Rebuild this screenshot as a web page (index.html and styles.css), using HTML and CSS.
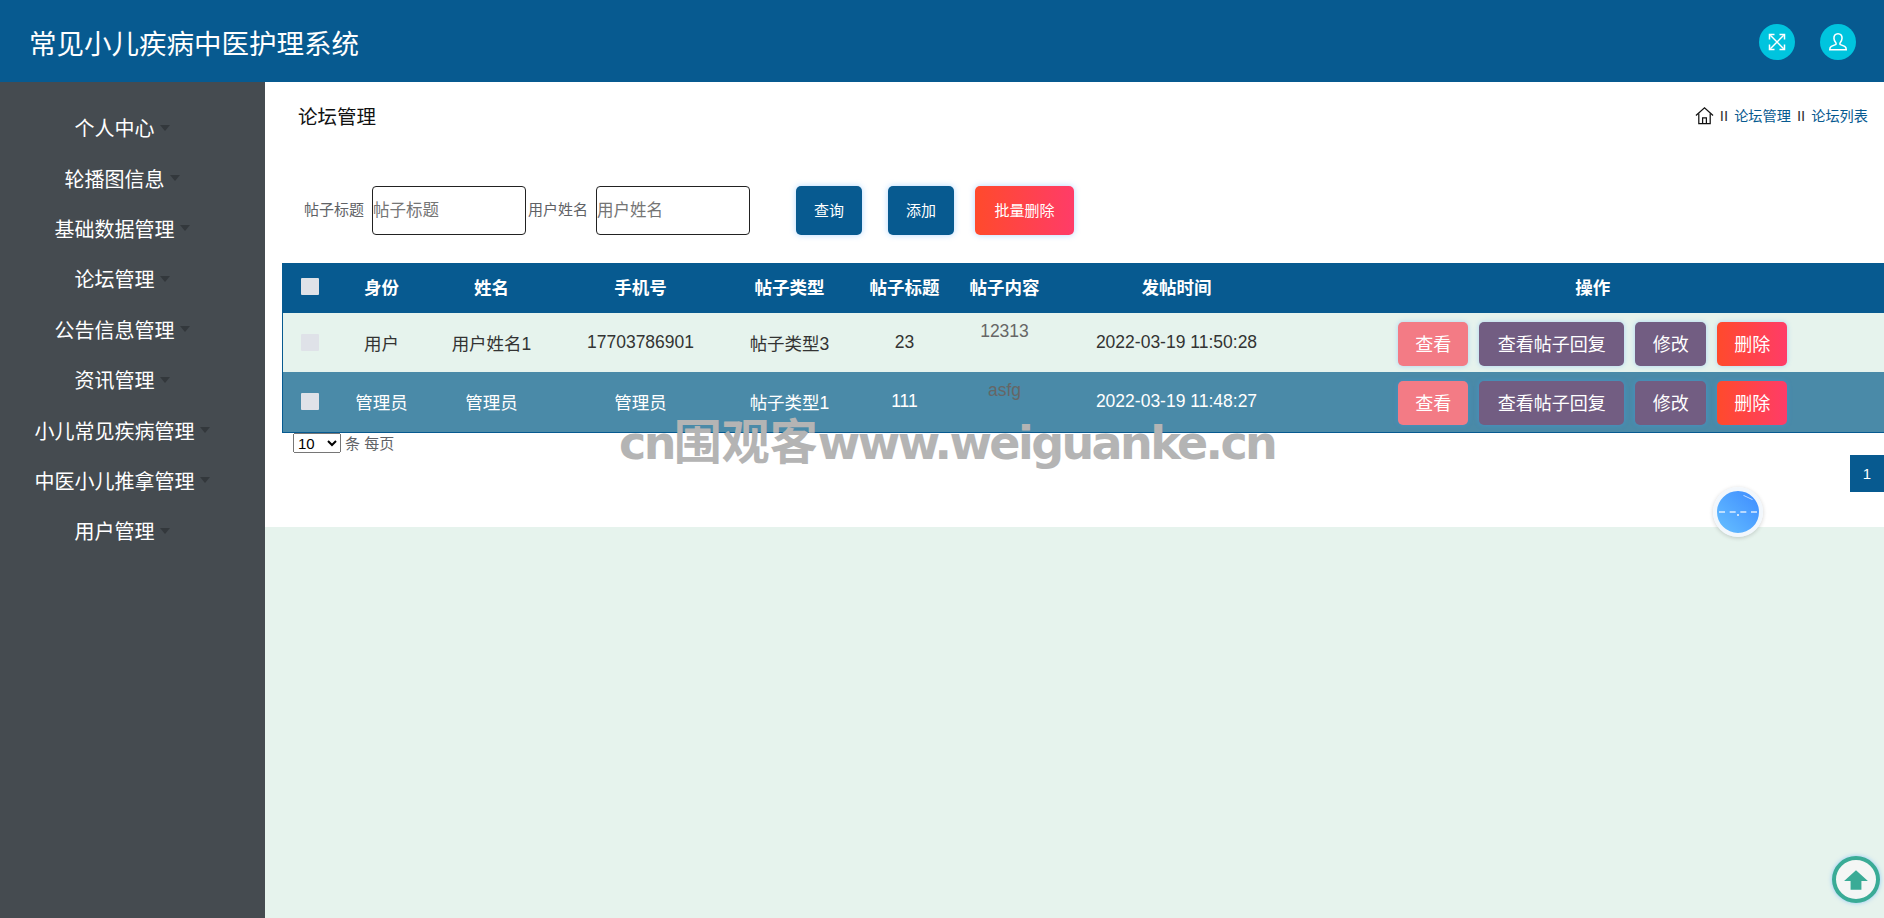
FILE: index.html
```html
<!DOCTYPE html>
<html lang="zh-CN">
<head>
    <meta charset="UTF-8">
    <title>常见小儿疾病中医护理系统</title>
    <link rel="stylesheet" href="styles.css">
</head>
<body>
    <header class="topbar">
        <div class="brand">常见小儿疾病中医护理系统</div>
        <div class="top-actions">
            <a class="round-btn">
                <svg viewBox="0 0 24 24" width="20" height="20" fill="none" stroke="#fff" stroke-width="1.8">
                    <path d="M4 4l16 16M20 4L4 20"/>
                    <path d="M3 9V3h6M15 3h6v6M21 15v6h-6M9 21H3v-6"/>
                </svg>
            </a>
            <a class="round-btn">
                <svg viewBox="0 0 24 24" width="22" height="22" fill="none" stroke="#fff" stroke-width="1.7">
                    <path d="M12 3c-3 0-4.600 2.200-4.400 5 .1 2 .9 3.600 2 4.800.5.600.4 1.700-.4 2.100l-4.500 1.900C3.500 17.500 3 18.700 3 20.500h18c0-1.800-.5-3-1.700-3.700l-4.500-1.900c-.8-.4-.9-1.500-.4-2.100 1.100-1.200 1.900-2.800 2-4.800.2-2.800-1.400-5-4.400-5z"/>
                </svg>
            </a>
        </div>
    </header>

    <div class="layout">
        <aside class="sidebar">
            <a class="side-item">个人中心</a>
            <a class="side-item">轮播图信息</a>
            <a class="side-item">基础数据管理</a>
            <a class="side-item">论坛管理</a>
            <a class="side-item">公告信息管理</a>
            <a class="side-item">资讯管理</a>
            <a class="side-item">小儿常见疾病管理</a>
            <a class="side-item">中医小儿推拿管理</a>
            <a class="side-item">用户管理</a>
        </aside>

        <main class="main">
            <section class="panel">
                <div class="page-head">
                    <div class="page-title">论坛管理</div>
                    <div class="crumbs">
                        <svg class="home-icon" viewBox="0 0 20 20" width="19" height="19" fill="none" stroke="#111" stroke-width="1.3">
                            <path d="M1 10L10 2l9 8"/>
                            <path d="M4 8v10.500h12V8"/>
                            <path d="M8 18.500v-6h4v6"/>
                        </svg>
                        <span class="sep">II</span>
                        <span>论坛管理</span>
                        <span class="sep">II</span>
                        <span>论坛列表</span>
                    </div>
                </div>

                <form class="search-bar">
                    <label class="search-label">帖子标题</label>
                    <input class="search-input" type="text" placeholder="帖子标题">
                    <label class="search-label">用户姓名</label>
                    <input class="search-input" type="text" placeholder="用户姓名">
                    <button type="button" class="tool-btn btn-query">查询</button>
                    <button type="button" class="tool-btn btn-add">添加</button>
                    <button type="button" class="tool-btn btn-batch">批量删除</button>
                </form>

                <table class="forum-table">
                    <thead>
                        <tr>
                            <th class="col-check"><input class="check" type="checkbox"></th>
                            <th class="col-role">身份</th>
                            <th class="col-name">姓名</th>
                            <th class="col-phone">手机号</th>
                            <th class="col-type">帖子类型</th>
                            <th class="col-title">帖子标题</th>
                            <th class="col-content">帖子内容</th>
                            <th class="col-time">发帖时间</th>
                            <th class="col-ops">操作</th>
                        </tr>
                    </thead>
                    <tbody>
                        <tr class="row-a">
                            <td><input class="check" type="checkbox"></td>
                            <td>用户</td>
                            <td>用户姓名1</td>
                            <td>17703786901</td>
                            <td>帖子类型3</td>
                            <td>23</td>
                            <td class="cell-content">12313</td>
                            <td>2022-03-19 11:50:28</td>
                            <td class="cell-ops">
                                <button class="op-btn op-view">查看</button>
                                <button class="op-btn op-reply">查看帖子回复</button>
                                <button class="op-btn op-edit">修改</button>
                                <button class="op-btn op-del">删除</button>
                            </td>
                        </tr>
                        <tr class="row-b">
                            <td><input class="check" type="checkbox"></td>
                            <td>管理员</td>
                            <td>管理员</td>
                            <td>管理员</td>
                            <td>帖子类型1</td>
                            <td>111</td>
                            <td class="cell-content">asfg</td>
                            <td>2022-03-19 11:48:27</td>
                            <td class="cell-ops">
                                <button class="op-btn op-view">查看</button>
                                <button class="op-btn op-reply">查看帖子回复</button>
                                <button class="op-btn op-edit">修改</button>
                                <button class="op-btn op-del">删除</button>
                            </td>
                        </tr>
                    </tbody>
                </table>

                <div class="page-size">
                    <select class="size-select">
                        <option>10</option>
                    </select>
                    <span>条 每页</span>
                </div>
                <div class="pager">
                    <a class="page-num">1</a>
                </div>
            </section>
        </main>
    </div>

    <div class="watermark"><span class="wm-latin">cn</span><span class="wm-cjk">围观客</span><span class="wm-latin">www.weiguanke.cn</span></div>

    <div class="float-ball">
        <span class="ball-glint"></span>
        <span class="ball-line"></span>
        <span class="ball-dot"></span>
    </div>

    <a class="back-top">
        <svg viewBox="0 0 24 24" width="26" height="26" fill="#3aab96">
            <path d="M12 3L23 13h-6v8H7v-8H1z"/>
        </svg>
    </a>
</body>
</html>
```

FILE: styles.css
```css
* { box-sizing: border-box; }
html, body { margin: 0; padding: 0; height: 100%; }
body { font-family: "Liberation Sans", "Noto Sans CJK SC", sans-serif; background: #e6f3ed; color: #333; overflow: hidden; position: relative; }

.topbar { height: 82px; background: #075a90; display: flex; align-items: center; justify-content: space-between; padding: 2px 28px 0 29px; }
.brand { font-size: 27.5px; color: #fff; }
.top-actions { display: flex; gap: 25px; }
.round-btn { width: 36px; height: 36px; border-radius: 50%; background: #00c4de; display: flex; align-items: center; justify-content: center; }

.layout { display: flex; height: 836px; }
.sidebar { width: 265px; background: #454b50; padding: 20.5px 21px 0 0; flex-shrink: 0; }
.side-item { display: flex; align-items: center; justify-content: center; height: 50.4px; font-size: 20px; color: #fff; }
.side-item::after { content: ""; margin-left: 5px; border-top: 6px solid #33383c; border-left: 5px solid transparent; border-right: 5px solid transparent; }

.main { flex: 1; min-width: 0; }
.panel { background: #fff; height: 445px; }

.page-head { height: 70px; display: flex; align-items: center; justify-content: space-between; padding: 0 16px 4px 33px; }
.page-title { font-size: 19.5px; color: #111; }
.crumbs { display: flex; align-items: center; gap: 6px; font-size: 14.200px; color: #075a90; }
.crumbs .sep { color: #333; font-size: 15px; }

.search-bar { display: flex; align-items: center; margin-top: 34px; height: 49px; padding-left: 39px; }
.search-label { font-size: 15px; color: #606266; margin: 0 8px 4px 0; }
.search-input { width: 154px; height: 49px; border: 1px solid #222; border-radius: 4px; padding: 0; font-size: 16.500px; font-family: inherit; margin-right: 2px; }
.search-input::placeholder { color: #757575; }
.search-input + .search-label + .search-input { margin-right: 46px; }
.tool-btn { height: 49px; border: none; border-radius: 5px; color: #fff; font-size: 15px; font-family: inherit; padding: 0 0 3px; box-shadow: 0 0 6px rgba(64,158,255,0.4); }
.btn-query { width: 66px; background: #075a90; margin-right: 26px; }
.btn-add { width: 66px; background: #075a90; margin-right: 21px; }
.btn-batch { width: 99px; background: linear-gradient(90deg, #ff4a2c, #ff3c68); }

.forum-table { margin: 28px 0 0 17px; width: 1602px; table-layout: fixed; border-collapse: collapse; border-left: 1px solid #075a90; border-bottom: 1px solid #075a90; font-size: 17.500px; }
.forum-table th { height: 50px; background: #075a90; color: #fff; font-weight: bold; text-align: center; padding: 0 0 3px; }
.forum-table td { text-align: center; padding: 0; }
.col-check { width: 55px; }
.col-role { width: 88px; }
.col-name { width: 132px; }
.col-phone { width: 166px; }
.col-type { width: 132px; }
.col-title { width: 98px; }
.col-content { width: 102px; }
.col-time { width: 242px; }
.forum-table th.col-ops { padding-left: 4px; }
.row-a { height: 59px; background: #e6f3ed; color: #333; }
.row-b { height: 60px; background: #4a8aa8; color: #fff; }
.forum-table td.cell-content { vertical-align: top; padding-top: 8px; color: #666; }
.forum-table td.cell-ops { vertical-align: top; padding: 9px 0 0 4px; white-space: nowrap; font-size: 0; }
.check { appearance: none; display: block; width: 18px; height: 17px; margin: 0 0 0 18px; background: #dfe2e8; border: none; border-radius: 1px; }
.op-btn { height: 44px; border: none; border-radius: 5px; color: #fff; font-size: 18px; font-family: inherit; padding: 0 0 3px; margin: 0 5.500px; box-shadow: 0 0 5px rgba(64,158,255,0.35); }
.op-view { width: 70px; background: #f37b85; }
.op-reply { width: 145px; background: #725d82; }
.op-edit { width: 71px; background: #725d82; }
.op-del { width: 70px; background: linear-gradient(90deg, #ff4a2c, #ff3c68); }

.page-size { height: 20px; padding-left: 28px; display: flex; align-items: center; gap: 4px; font-size: 15px; color: #606266; }
.size-select { width: 48px; height: 20px; font-size: 15px; font-family: inherit; padding: 0; }
.pager { display: flex; justify-content: flex-end; margin-top: 2px; }
.page-num { width: 34px; height: 37px; background: #075a90; color: #fff; font-size: 15px; display: flex; align-items: center; justify-content: center; }

.watermark { position: absolute; left: 619px; top: 410px; font-family: "DejaVu Sans", "Noto Sans CJK SC", sans-serif; font-weight: bold; font-size: 46px; line-height: 64px; color: #b4b4b4; white-space: nowrap; pointer-events: none; }
.wm-latin { letter-spacing: -2.600px; }
.wm-cjk { font-size: 48px; }

.float-ball { position: absolute; left: 1713px; top: 487px; width: 50px; height: 50px; border-radius: 50%; border: 4px solid #f2f7fc; background: linear-gradient(45deg, #66c0ff, #3d8bff); box-shadow: 0 1px 4px rgba(0,0,0,0.18); }
.ball-line { position: absolute; left: 2px; right: 2px; top: 20px; border-top: 2px dashed rgba(255,255,255,0.6); }
.ball-dot { position: absolute; left: 20px; top: 23px; width: 2px; height: 2px; background: rgba(255,255,255,0.7); }
.ball-glint { position: absolute; left: 26px; top: 6px; width: 10px; border-top: 1px solid rgba(255,255,255,0.7); transform: rotate(25deg); }

.back-top { position: absolute; left: 1832px; top: 856px; width: 48px; height: 47px; border-radius: 50%; border: 4px solid #3aab96; background: #f4f6f5; display: flex; align-items: center; justify-content: center; box-shadow: 0 0 4px rgba(64,158,255,0.5); }
```
